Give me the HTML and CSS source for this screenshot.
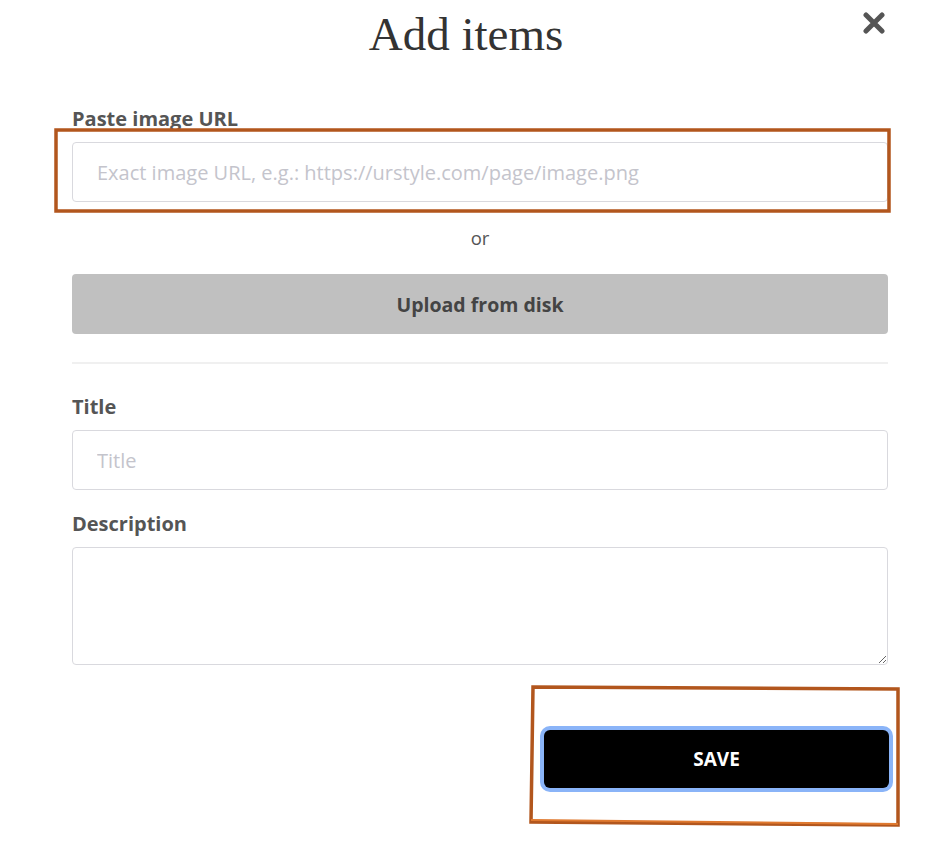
FILE: index.html
```html
<!DOCTYPE html>
<html lang="en">
<head>
    <meta charset="UTF-8">
    <meta name="viewport" content="width=device-width, initial-scale=1.0">
    <title>Add items</title>
    <link rel="stylesheet" href="styles.css">
</head>
<body>
    <div class="modal">
        <div class="modal-header">
            <h1>Add items</h1>
            <button class="close-btn" aria-label="Close">
                <svg width="22" height="22" viewBox="0 0 22 22">
                    <path d="M3 3 L19 19 M19 3 L3 19" stroke="#555" stroke-width="5" stroke-linecap="round"/>
                </svg>
            </button>
        </div>

        <form class="add-form">
            <label class="field-label" for="imageUrl">Paste image URL</label>
            <input class="field" id="imageUrl" type="text" placeholder="Exact image URL, e.g.: https://urstyle.com/page/image.png">

            <p class="or">or</p>

            <button type="button" class="upload-btn">Upload from disk</button>

            <hr class="divider">

            <label class="field-label" for="title">Title</label>
            <input class="field" id="title" type="text" placeholder="Title">

            <label class="field-label" for="description">Description</label>
            <textarea class="field field-area" id="description"></textarea>

            <div class="actions">
                <button type="button" class="save-btn">SAVE</button>
            </div>
        </form>
    </div>

    <!-- hand-drawn highlight marks on top of the screenshot -->
    <svg class="marks" width="943" height="843" viewBox="0 0 943 843">
        <path d="M56 130 L889 130 L889 211 L56 211 Z" fill="none" stroke="#b2561d" stroke-width="3.5"/>
        <path d="M533 687 L898 689 L898 825 L531 822 Z" fill="none" stroke="#b2561d" stroke-width="3.5"/>
        <path d="M531 820 L898 824" fill="none" stroke="#e07a30" stroke-width="2"/>
    </svg>
</body>
</html>
```

FILE: styles.css
```css
body {
    margin: 0;
    font-family: 'Open Sans', 'Noto Sans', sans-serif;
    background-color: #fff;
    color: #555;
}
.modal {
    width: 816px;
    padding: 0 0 40px 72px;
}
.modal-header {
    position: relative;
    height: 107px;
}
.modal-header h1 {
    margin: 0;
    padding: 6px 28px 0 0;
    font-family: 'Liberation Serif', 'DejaVu Serif', serif;
    font-weight: normal;
    font-size: 47px;
    line-height: 56px;
    color: #333;
    text-align: center;
}
.close-btn {
    position: absolute;
    top: 12px;
    right: 3px;
    padding: 0;
    border: none;
    background: none;
    cursor: pointer;
}
.add-form {
    display: flex;
    flex-direction: column;
}
.field-label {
    font-size: 20px;
    font-weight: 700;
    line-height: 24px;
    color: #555;
    margin-bottom: 11px;
}
.field {
    box-sizing: border-box;
    width: 816px;
    height: 60px;
    padding: 0 24px;
    border: 1.5px solid #d9d9de;
    border-radius: 4px;
    font-family: inherit;
    font-size: 20px;
    color: #555;
    outline: none;
}
.field::placeholder {
    color: #c4c4cc;
}
.field-area {
    height: 118px;
    padding: 14px 24px;
}
.or {
    margin: 24px 0 0;
    font-size: 18.5px;
    line-height: 24px;
    text-align: center;
    color: #555;
}
.upload-btn {
    margin-top: 24px;
    height: 60px;
    border: none;
    border-radius: 4px;
    background-color: #c0c0c0;
    font-family: inherit;
    font-size: 19.5px;
    font-weight: 700;
    color: #444;
    cursor: pointer;
}
.divider {
    width: 100%;
    margin: 28px 0 31px;
    border: none;
    border-top: 2px solid #f0f0f0;
}
.add-form .field + .field-label {
    margin-top: 22px;
}
.actions {
    display: flex;
    justify-content: flex-end;
    margin-top: 65px;
}
.save-btn {
    width: 345px;
    height: 58px;
    margin-right: -1px;
    border: none;
    border-radius: 6px;
    background-color: #000;
    box-shadow: 0 0 0 4px #8ab4f8;
    font-family: inherit;
    font-size: 19px;
    font-weight: 700;
    color: #fff;
    cursor: pointer;
}
.marks {
    position: absolute;
    top: 0;
    left: 0;
    pointer-events: none;
}
```
